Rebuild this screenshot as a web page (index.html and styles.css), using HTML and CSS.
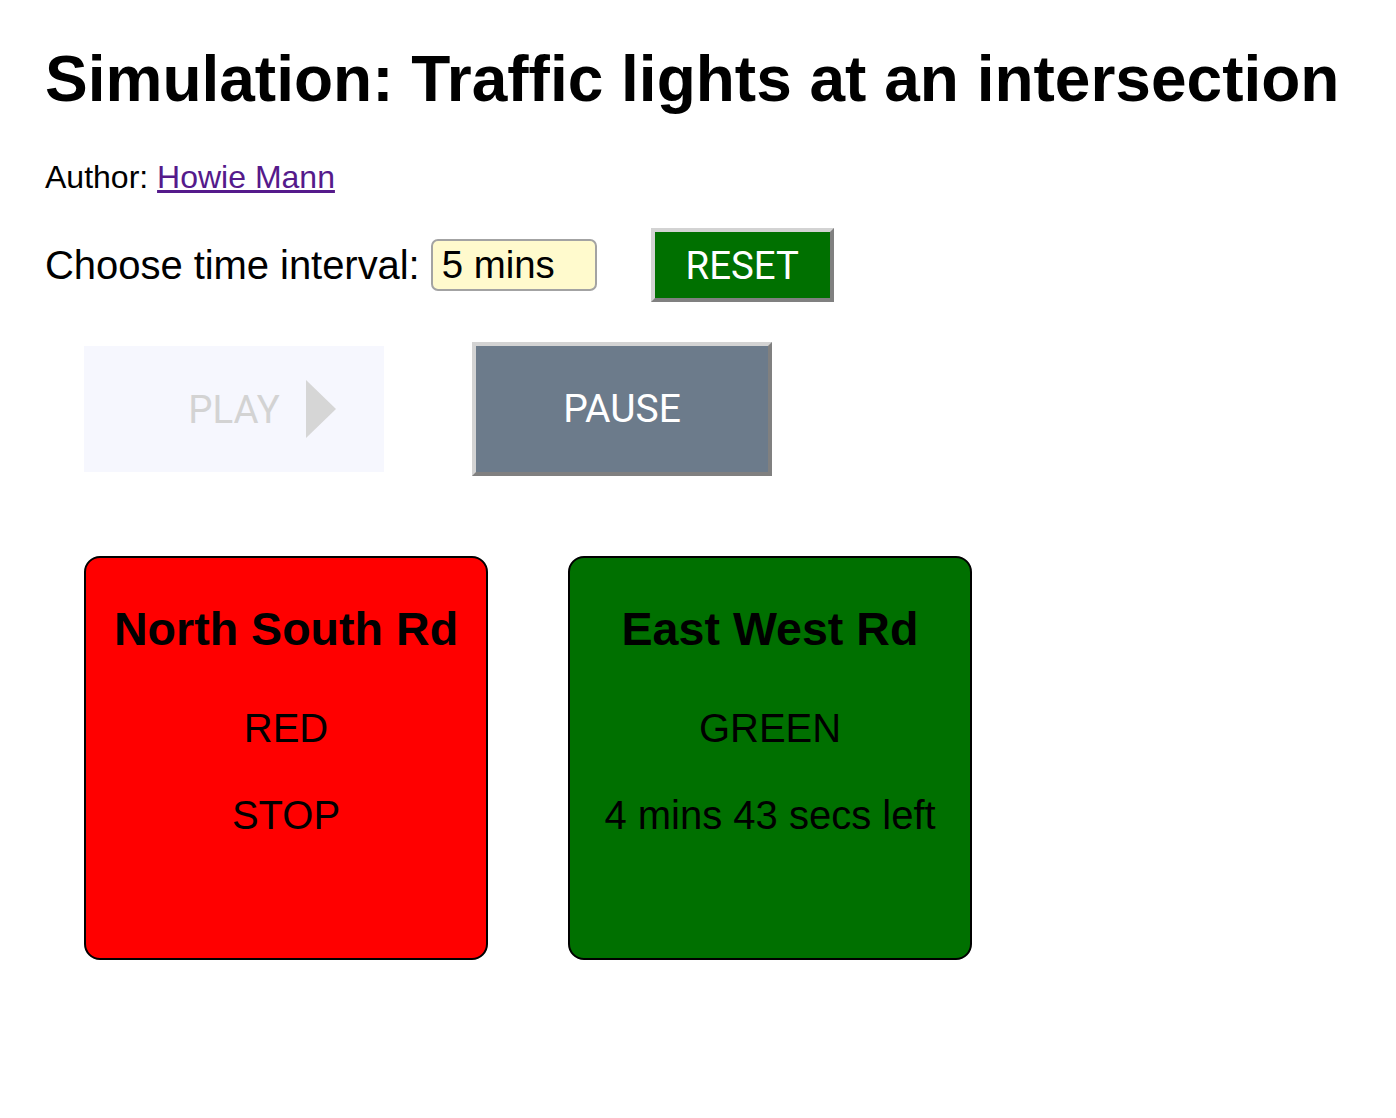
FILE: index.html
```html
<!DOCTYPE html>
<html lang="en">
<head>
<meta charset="utf-8">
<title>Traffic lights simulation</title>
<link rel="stylesheet" href="styles.css">
</head>
<body>
<main class="page">
  <h1 class="title">Simulation: Traffic lights at an intersection</h1>
  <p class="author">Author: <a href="#" class="author-link">Howie Mann</a></p>

  <div class="interval-row">
    <label class="interval-label" for="interval">Choose time interval:</label>
    <input class="interval-input" id="interval" type="text" value="5 mins">
    <button class="btn-reset" type="button">RESET</button>
  </div>

  <div class="controls">
    <button class="btn-play" type="button" disabled><span class="play-text">PLAY</span></button>
    <button class="btn-pause" type="button">PAUSE</button>
  </div>

  <div class="lights">
    <section class="light light-red">
      <h2 class="light-name">North South Rd</h2>
      <p class="light-state">RED</p>
      <p class="light-info">STOP</p>
    </section>
    <section class="light light-green">
      <h2 class="light-name">East West Rd</h2>
      <p class="light-state">GREEN</p>
      <p class="light-info">4 mins 43 secs left</p>
    </section>
  </div>
</main>
</body>
</html>
```
FILE: styles.css
```css
* { box-sizing: border-box; }

body {
  margin: 0;
  background: #ffffff;
  color: #000000;
  font-family: "Liberation Sans", Arial, sans-serif;
}

.page {
  padding: 0 0 0 45px;
}

.title {
  font-size: 64px;
  line-height: 74px;
  font-weight: bold;
  margin: 42px 0 0;
  white-space: nowrap;
}

.author {
  font-size: 32px;
  line-height: 37px;
  margin: 43px 0 0;
}

.author-link {
  color: #551a8b;
  text-decoration: underline;
}

.interval-row {
  display: flex;
  align-items: center;
  margin-top: 32px;
  height: 74px;
}

.interval-label {
  font-size: 40px;
  line-height: 46px;
  letter-spacing: -0.05px;
}

.interval-input {
  margin-left: 11px;
  width: 166px;
  height: 52px;
  border: 2px solid #a3a3a3;
  border-radius: 7px;
  background: #fffacd;
  font-family: "Liberation Sans", Arial, sans-serif;
  font-size: 38.4px;
  color: #000;
  padding: 0 0 0 9px;
  outline: none;
}

.btn-reset {
  margin-left: 54px;
  width: 183px;
  height: 74px;
  background: #007000;
  color: #ffffff;
  font-family: Roboto, "Liberation Sans", sans-serif;
  font-size: 38.4px;
  padding: 0;
  border-width: 4px;
  border-style: solid;
  border-color: #d3d3d3 #808080 #808080 #d3d3d3;
}

.controls {
  display: flex;
  align-items: center;
  margin: 40px 0 0 39px;
  gap: 88px;
}

.btn-play {
  width: 300px;
  height: 126px;
  border: none;
  background: #f6f7fe;
  color: #d3d3d3;
  font-family: Roboto, "Liberation Sans", sans-serif;
  font-size: 38.4px;
  padding: 0;
}

.play-text {
  position: relative;
  display: inline-block;
}

.play-text::after {
  content: "";
  position: absolute;
  left: calc(100% + 26px);
  top: 50%;
  margin-top: -29px;
  width: 0;
  height: 0;
  border-top: 29px solid transparent;
  border-bottom: 29px solid transparent;
  border-left: 30px solid #d6d6d6;
}

.btn-pause {
  width: 300px;
  height: 134px;
  background: #6c7b8b;
  color: #ffffff;
  font-family: Roboto, "Liberation Sans", sans-serif;
  font-size: 39px;
  padding: 0;
  border-width: 4px;
  border-style: solid;
  border-color: #d3d3d3 #808080 #808080 #d3d3d3;
}

.lights {
  display: flex;
  gap: 80px;
  margin: 80px 0 0 39px;
  padding-bottom: 100px;
}

.light {
  width: 404px;
  height: 404px;
  border: 2px solid #000;
  border-radius: 16px;
  text-align: center;
  padding-top: 45px;
}

.light-red { background: #ff0000; }
.light-green { background: #007000; }

.light-name {
  font-size: 46.6px;
  line-height: 53px;
  font-weight: bold;
  margin: 0;
}

.light-state,
.light-info {
  font-size: 40px;
  line-height: 46px;
}

.light-state { margin: 49px 0 0; }
.light-info { margin: 41px 0 0; white-space: nowrap; }
```
